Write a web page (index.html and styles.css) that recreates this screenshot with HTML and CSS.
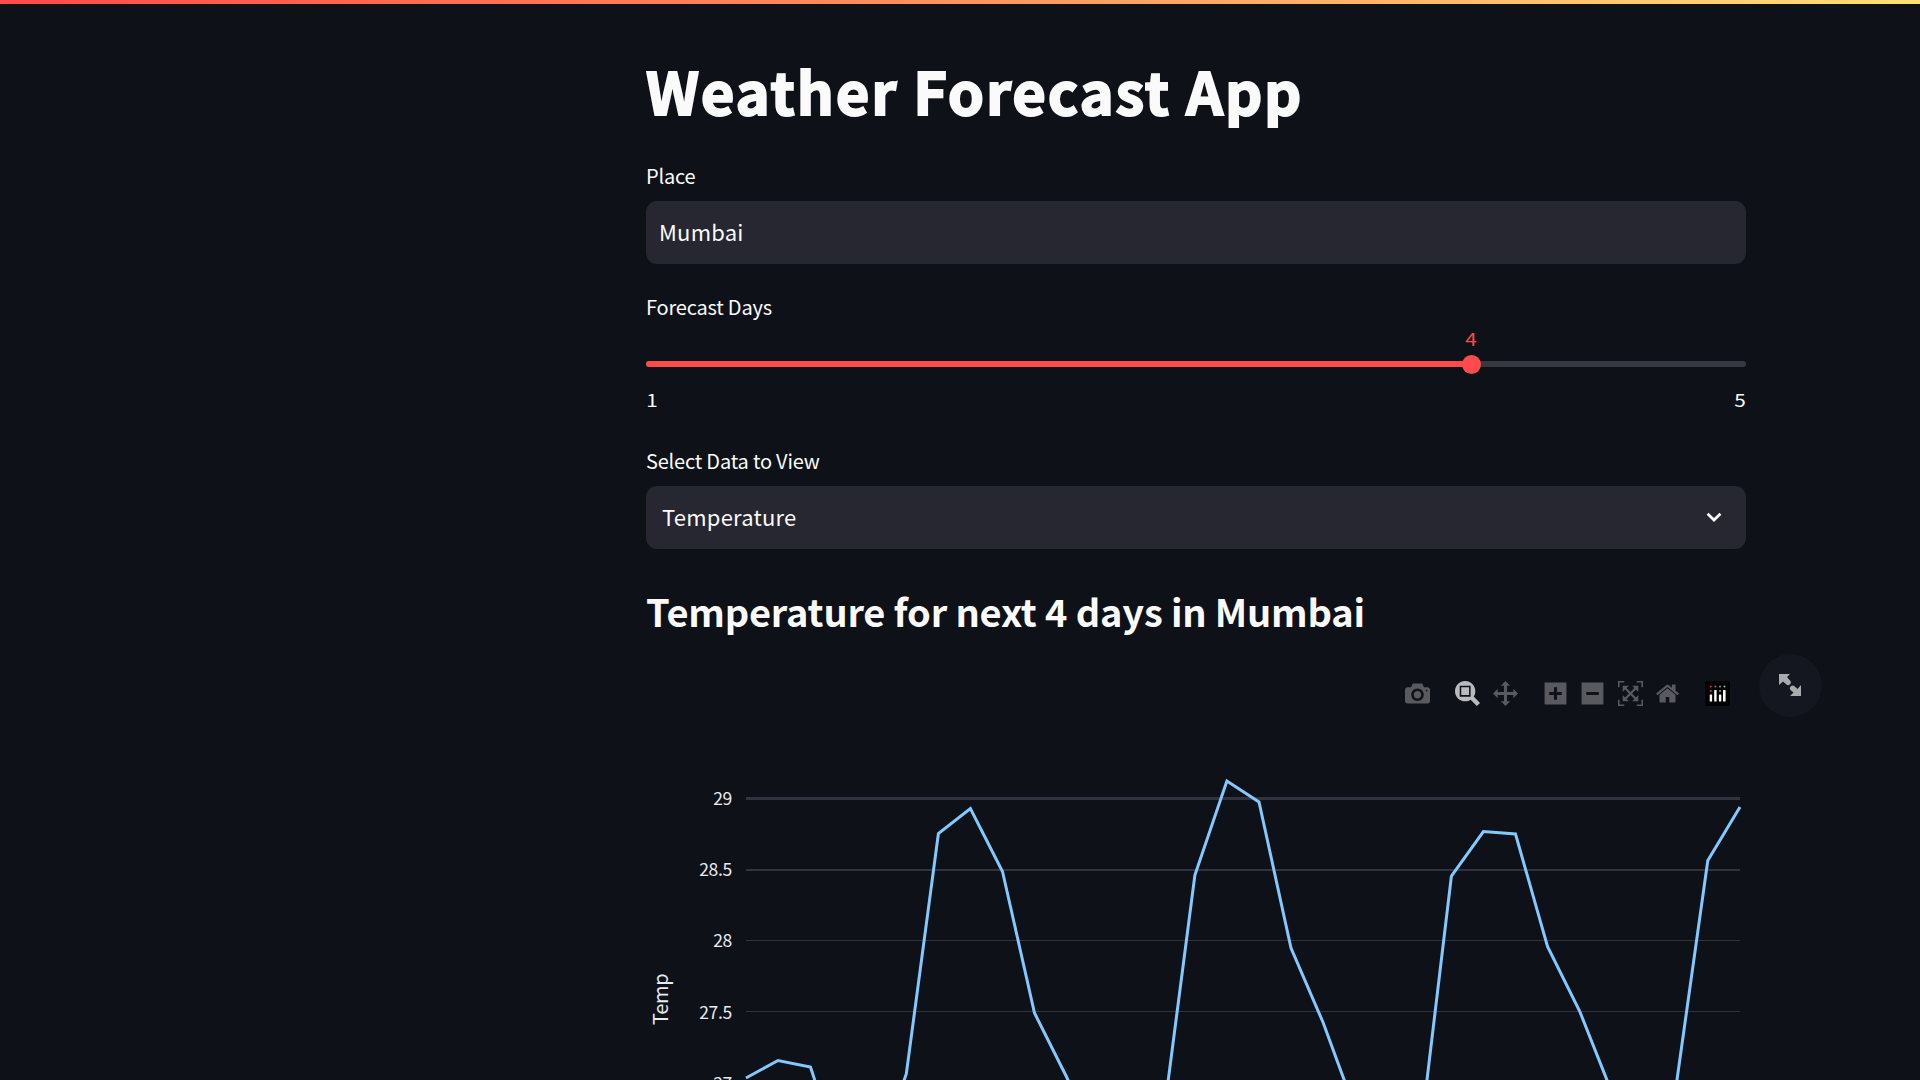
FILE: index.html
```html
<!DOCTYPE html>
<html lang="en">
<head>
<meta charset="utf-8">
<title>Weather Forecast App</title>
<link rel="stylesheet" href="styles.css">
</head>
<body>
<div class="decoration"></div>
<main class="page">
  <h1 class="title">Weather Forecast App</h1>

  <label class="label">Place</label>
  <div class="field field-text"><span>Mumbai</span></div>

  <label class="label label-days">Forecast Days</label>
  <div class="slider">
    <div class="track"><div class="track-fill"></div></div>
    <div class="thumb"><span class="thumb-value">4</span></div>
  </div>
  <div class="slider-range"><span>1</span><span>5</span></div>

  <label class="label label-select">Select Data to View</label>
  <div class="field field-select">
    <span>Temperature</span>
    <svg class="chevron" viewBox="0 0 16 10"><path d="M1.600 1.800 8 8l6.400-6.200" fill="none" stroke="currentColor" stroke-width="2.800"/></svg>
  </div>

  <h2 class="subtitle">Temperature for next 4 days in Mumbai</h2>

  <section class="chart">
    <div class="modebar">
      <svg class="icon" viewBox="0 0 1000 1000"><path transform="matrix(1 0 0 -1 0 850)" d="m500 450c-83 0-150-67-150-150 0-83 67-150 150-150 83 0 150 67 150 150 0 83-67 150-150 150z m400 150h-120c-16 0-34 13-39 29l-31 93c-6 15-23 28-40 28h-340c-16 0-34-13-39-28l-31-94c-6-15-23-28-40-28h-120c-55 0-100-45-100-100v-450c0-55 45-100 100-100h800c55 0 100 45 100 100v450c0 55-45 100-100 100z m-400-550c-138 0-250 112-250 250 0 138 112 250 250 250 138 0 250-112 250-250 0-138-112-250-250-250z m365 380c-19 0-35 16-35 35 0 19 16 35 35 35 19 0 35-16 35-35 0-19-16-35-35-35z"/></svg>
      <svg class="icon icon-active group" viewBox="0 0 1000 1000"><path transform="matrix(1 0 0 -1 0 850)" d="m1000-25l-250 251c40 63 63 138 63 218 0 224-182 406-407 406-224 0-406-182-406-406s183-406 407-406c80 0 155 22 218 62l250-250 125 125z m-812 250l0 438 437 0 0-438-437 0z m62 375l313 0 0-312-313 0 0 312z"/></svg>
      <svg class="icon" viewBox="0 0 1000 1000"><path transform="matrix(1 0 0 -1 0 850)" d="m1000 350l-187 188 0-125-250 0 0 250 125 0-188 187-187-187 125 0 0-250-250 0 0 125-188-188 186-187 0 125 252 0 0-250-125 0 187-188 188 188-125 0 0 250 250 0 0-126 187 188z"/></svg>
      <svg class="icon group" viewBox="-62 0 1000 1000"><path transform="matrix(1 0 0 -1 0 850)" d="m1 787l0-875 875 0 0 875-875 0z m687-500l-187 0 0-187-125 0 0 187-188 0 0 125 188 0 0 187 125 0 0-187 187 0 0-125z"/></svg>
      <svg class="icon" viewBox="-62 0 1000 1000"><path transform="matrix(1 0 0 -1 0 850)" d="m0 788l0-876 875 0 0 876-875 0z m688-500l-500 0 0 125 500 0 0-125z"/></svg>
      <svg class="icon" viewBox="0 0 1000 1000"><path transform="matrix(1 0 0 -1 0 850)" d="m250 850l-187 0-63 0 0-62 0-188 63 0 0 188 187 0 0 62z m688 0l-188 0 0-62 188 0 0-188 62 0 0 188 0 62-62 0z m-875-938l0 188-63 0 0-188 0-62 63 0 187 0 0 62-187 0z m875 188l0-188-188 0 0-62 188 0 62 0 0 62 0 188-62 0z m-125 188l-1 0-93-94-156 156 156 156 92-93 2 0 0 250-250 0 0-2 93-92-156-156-156 156 94 92 0 2-250 0 0-250 0 0 93 93 157-156-157-156-93 94 0 0 0-250 250 0 0 0-94 93 156 157 156-157-93-93 0 0 250 0 0 250z"/></svg>
      <svg class="icon" viewBox="-36 0 1000 1000"><path transform="matrix(1 0 0 -1 0 850)" d="m786 296v-267q0-15-11-26t-25-10h-214v214h-143v-214h-214q-15 0-25 10t-11 26v267q0 1 0 2t0 2l321 264 321-264q1-1 1-4z m124 39l-34-41q-5-5-12-6h-2q-7 0-12 3l-386 322-386-322q-7-4-13-4-7 2-12 7l-35 41q-4 5-3 13t6 12l401 334q18 15 42 15t43-15l136-114v109q0 8 5 13t13 5h107q8 0 13-5t5-13v-227l122-102q5-5 6-12t-4-13z"/></svg>
      <svg class="icon logo group" viewBox="0 0 25 25">
        <rect width="25" height="25" rx="2.500" fill="#000"/>
        <g fill="#fff"><rect x="4.700" y="13.500" width="2.400" height="7" rx=".6"/><rect x="9.200" y="9" width="2.400" height="11.500" rx=".6"/><rect x="13.900" y="13.500" width="2.400" height="7" rx=".6"/><rect x="18" y="9" width="2.600" height="11.500" rx=".6"/></g>
        <g fill="#d8375f"><circle cx="5.800" cy="5.500" r="1"/><circle cx="5.800" cy="10" r="1"/></g>
        <circle cx="10.400" cy="5.500" r="1" fill="#b4588c"/>
        <g fill="#9d91b8"><circle cx="15" cy="5.500" r="1"/><circle cx="15" cy="10" r="1"/></g>
        <circle cx="19.500" cy="5.500" r="1" fill="#7fcdbb"/>
      </svg>
      <div class="fullscreen">
        <svg viewBox="0 0 22 22"><path d="M0 0h11L8 3l3 3.500a2.300 2.300 0 0 1-3.800 3.800L4 7.500 0 11zM22 22H11l3.500-3.500-2.500-2a2.500 2.500 0 0 1 3.500-4.300l3 2.800L22 11z"/></svg>
      </div>
    </div>
    <svg class="plot" viewBox="646 740 1100 340">
      <g class="grid">
        <rect x="746" y="797" width="994" height="3"/>
        <rect x="746" y="869" width="994" height="2"/>
        <rect x="746" y="940" width="994" height="1"/>
        <rect x="746" y="1011" width="994" height="1"/>
      </g>
      <polyline class="line" points="746,1078 778,1060.500 810.500,1067 842,1165 874,1165 906.300,1074 938.400,833.500 970.400,808.500 1002.500,871.500 1034.500,1013 1066.600,1077 1098.700,1150 1130.700,1170 1162.800,1122 1194.900,875 1226.900,781 1259,802 1291,948 1323.100,1022.500 1355.200,1110 1387,1170 1419.300,1144 1451.400,876 1483.400,831.500 1515.500,834 1547.500,946.500 1579.600,1011 1611.700,1092 1643.700,1160 1675.700,1089 1707.800,860.500 1740,807"/>
      <g class="ticks">
        <text x="732" y="805">29</text>
        <text x="732" y="876">28.5</text>
        <text x="732" y="947">28</text>
        <text x="732" y="1019">27.5</text>
        <text x="732" y="1090">27</text>
      </g>
      <text class="axis-title" transform="translate(668 1025) rotate(-90)">Temp</text>
    </svg>
  </section>
</main>
</body>
</html>
```
FILE: styles.css
```css
* { box-sizing: border-box; }

body {
  margin: 0;
  height: 1080px;
  overflow: hidden;
  background: #0e1117;
  color: #fafafa;
  font-family: "Noto Sans CJK SC", "Noto Sans", sans-serif;
}

.decoration {
  height: 4px;
  background: linear-gradient(90deg, #ff4b4b, #ff8c5a 45%, #ffe073);
}

.page {
  display: flex;
  flex-direction: column;
  width: 1100px;
  margin-left: 646px;
}

.title {
  margin: 46px 0 0;
  height: 79px;
  font-size: 58px;
  font-weight: 700;
  line-height: 80px;
  letter-spacing: 1.800px;
  -webkit-text-stroke: 1.900px #fafafa;
  white-space: nowrap;
}

.label {
  height: 30px;
  margin-top: 32px;
  margin-bottom: 10px;
  font-size: 20px;
  line-height: 30px;
  letter-spacing: -0.200px;
}

.field {
  display: flex;
  align-items: center;
  justify-content: space-between;
  height: 63px;
  padding: 0 14px;
  border-radius: 11px;
  background: #262730;
  font-size: 22px;
  line-height: 61px;
  letter-spacing: 0.220px;
}

.field span { height: 63px; }

.field-text { padding-left: 13px; }

.field-select { padding: 0 24.500px 0 16px; }

.chevron {
  width: 16px;
  height: 10px;
  margin-bottom: 2px;
}

.label-days {
  margin: 28px 0 0;
}

.slider {
  position: relative;
  height: 20px;
  margin-top: 32px;
  padding-top: 7px;
}

.track {
  height: 6px;
  border-radius: 3px;
  background: #363942;
  overflow: hidden;
}

.track-fill {
  width: 75%;
  height: 100%;
  background: #ff4b4b;
}

.thumb {
  position: absolute;
  left: calc(75% - 9.500px);
  top: 0.500px;
  width: 19px;
  height: 19px;
  border-radius: 50%;
  background: #ff4b4b;
}

.thumb-value {
  position: absolute;
  left: 50%;
  bottom: 21px;
  color: #ff4b4b;
  font-size: 18px;
  line-height: 30px;
  transform: translateX(-50%) scaleX(1.15);
}

.slider-range {
  display: flex;
  justify-content: space-between;
  height: 31px;
  margin-top: 10px;
  padding: 0 1.500px 0 1px;
  font-size: 18px;
  line-height: 30px;
}

.slider-range span { transform: scaleX(1.15); }

.label-select {
  margin-top: 31px;
  margin-bottom: 10px;
}

.subtitle {
  height: 49px;
  margin: 37px 0 0;
  font-size: 38px;
  font-weight: 700;
  line-height: 50px;
  letter-spacing: -0.200px;
  white-space: nowrap;
}

.modebar {
  display: flex;
  align-items: center;
  height: 63px;
  margin: 19px -76px 0 0;
  padding-left: 759px;
  gap: 12.500px;
}

.icon {
  flex: none;
  width: 25px;
  height: 25px;
  margin-top: 16px;
  fill: #585a5f;
}

.icon-active { fill: #b9babd; }

.group { margin-left: 12.500px; }

.fullscreen {
  display: flex;
  align-items: center;
  justify-content: center;
  flex: none;
  width: 63px;
  height: 63px;
  margin-top: -1px;
  margin-left: 16px;
  border-radius: 50%;
  background: #14171f;
}

.fullscreen svg {
  width: 22px;
  height: 22px;
  fill: #a9aaad;
}

.plot {
  display: block;
  width: 1100px;
  height: 340px;
  margin-top: 23px;
}

.grid { fill: #31333f; }

.line {
  fill: none;
  stroke: #83c9ff;
  stroke-width: 3;
}

.ticks {
  fill: #e6eaf1;
  font-size: 17.500px;
  letter-spacing: -0.300px;
  text-anchor: end;
}

.axis-title {
  fill: #e6eaf1;
  font-size: 20px;
  letter-spacing: -0.300px;
}
```
